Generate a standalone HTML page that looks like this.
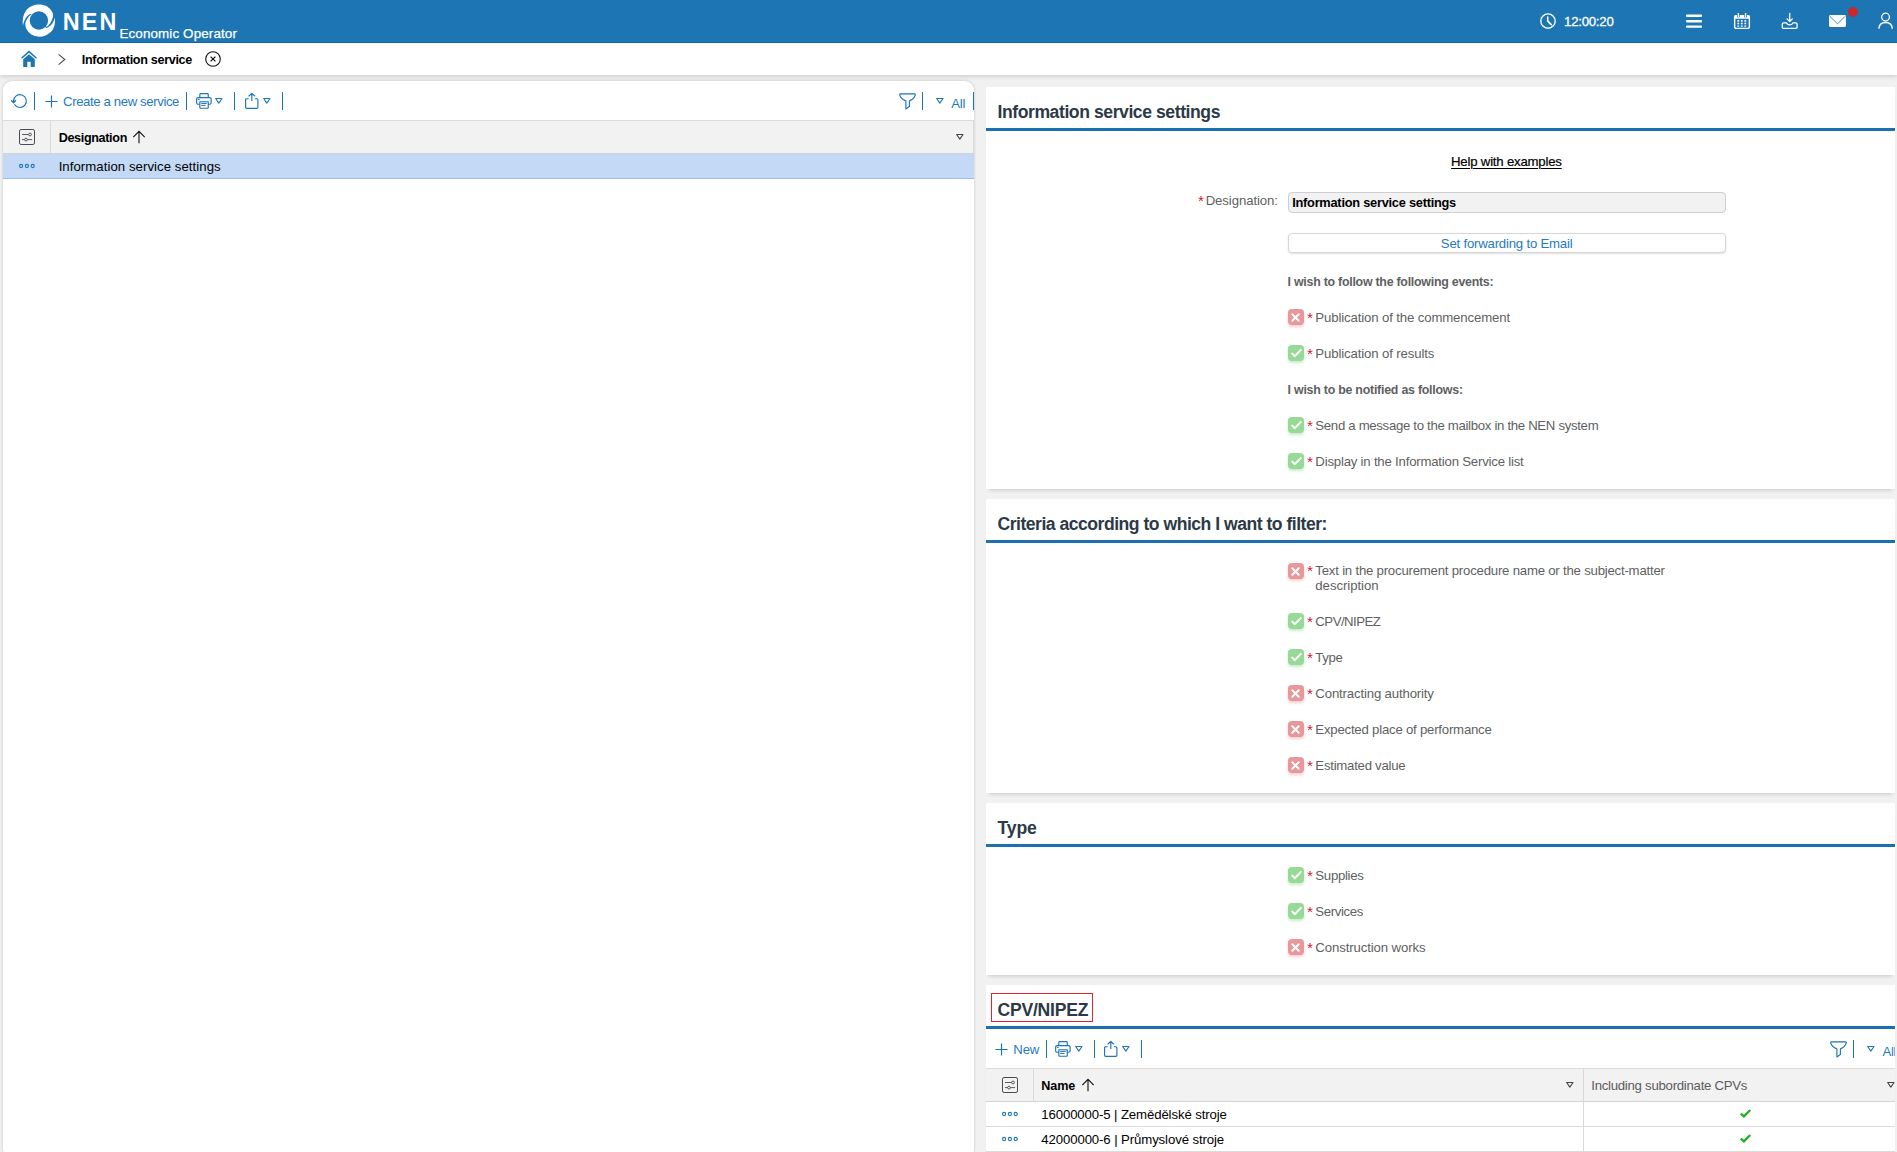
<!DOCTYPE html>
<html lang="en">
<head>
<meta charset="utf-8">
<title>NEN - Information service</title>
<style>
*{box-sizing:border-box;margin:0;padding:0}
html,body{width:1897px;height:1152px;overflow:hidden}
body{position:relative;background:#f1f1f1;font-family:"Liberation Sans",sans-serif;font-size:13.2px;color:#000}
.abs{position:absolute}
.t{position:absolute;white-space:nowrap;line-height:16px}
svg{position:absolute;overflow:visible}
#hdr{left:0;top:0;width:1897px;height:43px;background:#1d75b3;border-bottom:1px solid #0e69aa}
#crumb{left:0;top:43px;width:1897px;height:32px;background:#fff;box-shadow:0 1px 5px rgba(0,0,0,.18)}
#lp{left:3px;top:81px;width:971px;height:1077px;background:#fff;border-radius:9px;box-shadow:0 0 3px rgba(0,0,0,.2)}
.sep{position:absolute;width:1px;background:#1d75b3}
.thead{position:absolute;background:#f2f2f2;border-top:1px solid #dcdcdc;border-bottom:1px solid #d4d4d4}
.vline{position:absolute;width:1px;background:#d9d9d9}
.hline{position:absolute;height:1px;background:#dcdcdc}
.sec{position:absolute;left:986px;width:909px;background:#fff;box-shadow:0 4px 4px -3px rgba(0,0,0,.18)}
.bl{position:absolute;left:0;right:0;top:41px;height:3px;background:#1b70b0}
.cb{position:absolute;left:1288px;width:16px;height:16px;border-radius:4px}
.cb.r{background:#e8979a;box-shadow:0 2px 3px rgba(226,130,134,.38)}
.cb.g{background:#97da97;box-shadow:0 2px 3px rgba(120,200,120,.38)}
.ast{position:absolute;color:#d0213b;font-size:15.4px;line-height:16px;width:8px}
</style>
</head>
<body>
<div id="crumb" class="abs"></div>
<div id="hdr" class="abs">
<svg style="left:22.140px;top:4.350px" width="34" height="33" viewBox="-17 -16.5 34 33">
<path d="M-16.04,5.20 C-16.08,4.44 -16.44,2.44 -16.30,0.66 C-16.16,-1.12 -15.92,-3.54 -15.20,-5.50 C-14.48,-7.46 -13.45,-9.55 -12.00,-11.10 C-10.55,-12.65 -8.50,-13.97 -6.50,-14.80 C-4.50,-15.63 -2.08,-16.07 0.00,-16.10 C2.08,-16.13 4.23,-15.68 6.00,-15.00 C7.77,-14.32 9.37,-13.17 10.60,-12.00 C11.83,-10.83 12.83,-9.17 13.40,-8.00 C13.97,-6.83 13.97,-5.93 14.00,-5.00 C14.03,-4.07 13.67,-2.83 13.60,-2.40 C13.43,-1.95 13.05,-0.63 12.60,0.30 C12.15,1.23 11.48,2.38 10.90,3.20 C10.32,4.02 9.64,4.68 9.10,5.20 C8.56,5.72 7.90,6.12 7.66,6.30 L-8.7,-6.7 C-8.95,-6.53 -9.63,-6.16 -10.20,-5.70 C-10.77,-5.24 -11.54,-4.62 -12.10,-3.95 C-12.66,-3.28 -13.12,-2.45 -13.55,-1.70 C-13.98,-0.95 -14.38,-0.20 -14.70,0.56 C-15.02,1.32 -15.28,2.07 -15.50,2.84 C-15.72,3.61 -15.95,4.81 -16.04,5.20 Z" fill="#fff"/>
<path d="M15.68,-2.99 C15.73,-2.33 16.11,-0.58 16.00,1.00 C15.89,2.58 15.67,4.78 15.00,6.50 C14.33,8.22 13.42,9.90 12.00,11.30 C10.58,12.70 8.42,14.09 6.50,14.90 C4.58,15.71 2.50,16.13 0.50,16.15 C-1.50,16.17 -3.75,15.69 -5.50,15.00 C-7.25,14.31 -8.78,13.17 -10.00,12.00 C-11.22,10.83 -12.21,9.22 -12.80,8.00 C-13.39,6.78 -13.43,5.22 -13.55,4.67 C-13.57,4.37 -13.73,3.49 -13.65,2.84 C-13.57,2.19 -13.38,1.46 -13.10,0.76 C-12.82,0.06 -12.37,-0.64 -11.95,-1.35 C-11.53,-2.06 -11.12,-2.87 -10.60,-3.50 C-10.07,-4.13 -9.33,-4.77 -8.80,-5.15 C-8.27,-5.53 -7.63,-5.69 -7.40,-5.80 L7.3,7.4 C7.54,7.33 8.15,7.30 8.75,7.00 C9.35,6.70 10.18,6.23 10.90,5.60 C11.62,4.97 12.45,4.08 13.10,3.20 C13.75,2.32 14.37,1.33 14.80,0.30 C15.23,-0.73 15.53,-2.44 15.68,-2.99 Z" fill="#fff"/>
<circle cx="-0.090" cy="0.020" r="9.200" fill="#1d75b3"/>
</svg>
<div class="t" style="left:62.82px;top:13.59px;font-size:23.4px;color:#fff;letter-spacing:2.052px;font-weight:700">NEN</div>
<div class="t" style="left:119.44px;top:25.96px;font-size:13.4px;color:#fff;letter-spacing:0.128px;-webkit-text-stroke:0.25px #fff">Economic Operator</div>
<svg style="left:1540px;top:13px" width="16" height="16" viewBox="0 0 16 16" fill="none" stroke="#fff" stroke-width="1.35" stroke-linecap="round" stroke-linejoin="round"><circle cx="8" cy="8" r="7.200"/><path d="M7.700,3.900 V8.100 L11.300,11.600" stroke-width="1.550"/></svg>
<div class="t" style="left:1564.05px;top:14.03px;font-size:13.2px;color:#fff;letter-spacing:-0.235px;-webkit-text-stroke:0.3px #fff">12:00:20</div>
<svg style="left:1686px;top:13px" width="16" height="16" viewBox="0 0 16 16" fill="#fff"><rect x="0" y="1.500" width="16" height="2.400" rx="0.800"/><rect x="0" y="7" width="16" height="2.400" rx="0.800"/><rect x="0" y="12.400" width="16" height="2.400" rx="0.800"/></svg>
<svg style="left:1734px;top:13px" width="16" height="16" viewBox="0 0 16 16">
<rect x="0.650" y="2.650" width="14.700" height="12.700" rx="1.300" fill="none" stroke="#fff" stroke-width="1.400"/>
<rect x="0.650" y="2.650" width="14.700" height="3.100" fill="#fff"/>
<rect x="3" y="2" width="2.700" height="2.300" fill="#1d75b3"/><rect x="10.200" y="2" width="2.700" height="2.300" fill="#1d75b3"/>
<rect x="3.700" y="0" width="1.300" height="4" fill="#fff"/><rect x="10.900" y="0" width="1.300" height="4" fill="#fff"/>
<g fill="#fff"><rect x="3.400" y="7.100" width="1.800" height="1.600"/><rect x="6.900" y="7.100" width="1.800" height="1.600"/><rect x="10.400" y="7.100" width="1.800" height="1.600"/>
<rect x="3.400" y="9.700" width="1.800" height="1.600"/><rect x="6.900" y="9.700" width="1.800" height="1.600"/><rect x="10.400" y="9.700" width="1.800" height="1.600"/>
<rect x="3.400" y="12.300" width="1.800" height="1.600" opacity="0.800"/><rect x="6.900" y="12.300" width="1.800" height="1.600" opacity="0.800"/><rect x="10.400" y="12.300" width="1.800" height="1.600" opacity="0.800"/></g></svg>
<svg style="left:1782px;top:13px" width="16" height="16" viewBox="0 0 16 16" fill="none" stroke="#fff" stroke-width="1.300" stroke-linecap="round" stroke-linejoin="round">
<path d="M7.700,0.500 V8.200 M5.100,5.900 L7.700,8.500 L10.300,5.900"/>
<path d="M1.700,9.900 H4.600 C5.200,11.300 6.300,11.900 7.700,11.900 C9.100,11.900 10.200,11.300 10.800,9.900 H13.700 C14.600,9.900 15.100,10.400 15.100,11.300 V13.900 C15.100,14.800 14.600,15.300 13.700,15.300 H1.700 C0.800,15.300 0.300,14.800 0.300,13.900 V11.300 C0.300,10.400 0.800,9.900 1.700,9.900 Z"/></svg>
<svg style="left:1829px;top:15px" width="17" height="12" viewBox="0 0 17 12"><rect x="0" y="0" width="17" height="12" rx="1.400" fill="#fff"/><path d="M0.900,1.300 L8.500,8.900 L16.100,1.300" fill="none" stroke="#1d75b3" stroke-width="0.850"/></svg>
<div class="abs" style="left:1848px;top:7px;width:10px;height:10px;border-radius:50%;background:#c9282c"></div>
<svg style="left:1877.900px;top:13px" width="16" height="16" viewBox="0 0 16 16" fill="none" stroke="#fff" stroke-width="1.3" stroke-linecap="butt"><circle cx="7.550" cy="4.100" r="3.900"/><path d="M0.950,15.800 C1.050,11.800 3.800,9.500 7.600,9.500 C11.400,9.500 14.150,11.800 14.250,15.800"/></svg>
</div>
<svg style="left:21px;top:51px" width="16" height="16" viewBox="0 0 16 16">
<path d="M0.500,7.200 L8,0.600 L15.500,7.200" fill="none" stroke="#1d75b3" stroke-width="1.500"/>
<path d="M2.200,8.200 L8,3.200 L13.800,8.200 V16 H9.700 V10.800 H6.300 V16 H2.200 Z" fill="#1d75b3"/></svg>
<svg style="left:58px;top:54px" width="8" height="11" viewBox="0 0 8 11" fill="none" stroke="#4a4a4a" stroke-width="1.100"><path d="M0.600,0.400 L6.800,5.500 L0.600,10.600"/></svg>
<div class="t" style="left:81.77px;top:51.93px;font-size:12.6px;color:#000;letter-spacing:-0.313px;font-weight:700">Information service</div>
<svg style="left:205px;top:51px" width="16" height="16" viewBox="0 0 16 16" fill="none" stroke="#111" stroke-width="1.100"><circle cx="8" cy="8" r="7.300"/><path d="M5.600,5.600 L10.400,10.400 M10.400,5.600 L5.600,10.400" stroke-width="1.200"/></svg>
<div id="lp" class="abs"></div>
<svg style="left:11.1px;top:92.7px" width="17" height="16" viewBox="0 0 17 16" fill="none" stroke="#1d75b3" stroke-width="1.100" stroke-linejoin="round"><path d="M3.380,11.280 A6.400,6.400 0 1 0 2.520,8.200 L2.500,9.500"/><path d="M0.200,7.200 L2.500,9.700 L4.900,7.200" stroke-width="1.300"/></svg>
<div class="sep" style="left:34px;top:92px;height:18px"></div><svg style="left:44.6px;top:94.5px" width="13" height="13" viewBox="0 0 13 13" fill="none" stroke="#1d75b3" stroke-width="1.2"><path d="M6.500,0.400 V12.600 M0.400,6.500 H12.600"/></svg>
<div class="t" style="left:63.05px;top:93.73px;font-size:13.2px;color:#1f7abf;letter-spacing:-0.393px">Create a new service</div>
<div class="sep" style="left:186px;top:92px;height:18px"></div><svg style="left:195.6px;top:93.4px" width="16" height="16" viewBox="0 0 16 16" fill="none" stroke="#1d75b3" stroke-width="1.15" stroke-linejoin="round">
<path d="M3.840,4.570 V1.400 C3.840,1 4.100,0.680 4.500,0.680 H11.600 C12,0.680 12.250,1 12.250,1.400 V4.570"/>
<path d="M3.840,11.230 H2.100 C1.300,11.230 0.650,10.600 0.650,9.800 V6 C0.650,5.200 1.300,4.570 2.100,4.570 H13.700 C14.500,4.570 15.140,5.200 15.140,6 V9.800 C15.140,10.600 14.500,11.230 13.700,11.230 H12.250"/>
<path d="M3.840,8.780 H12.250 V14.600 C12.250,15 12,15.290 11.600,15.290 H4.500 C4.100,15.290 3.840,15 3.840,14.600 Z"/>
<path d="M5.200,10.400 H10.800 M5.200,12.400 H9.600" stroke-width="1"/><path d="M1.900,6.400 H3.700" stroke-width="1"/></svg><svg style="left:215.4px;top:98.2px" width="8" height="7" viewBox="0 0 8 7" fill="none" stroke="#1d75b3" stroke-width="1.1" stroke-linejoin="round"><path d="M0.650,0.550 H7 L3.830,5.150 Z"/></svg><div class="sep" style="left:234px;top:92px;height:18px"></div><svg style="left:245.4px;top:93.4px" width="14" height="16" viewBox="0 0 14 16" fill="none" stroke="#1d75b3" stroke-width="1.15" stroke-linecap="round" stroke-linejoin="round">
<path d="M3.300,5.700 H1.600 C1,5.700 0.600,6.100 0.600,6.700 V14.300 C0.600,14.900 1,15.300 1.600,15.300 H11.900 C12.500,15.300 12.900,14.900 12.900,14.300 V6.700 C12.900,6.100 12.500,5.700 11.900,5.700 H10.300"/>
<path d="M6.800,0.700 V7.400 M3.900,3 L6.800,0.450 L9.700,3"/></svg><svg style="left:263.4px;top:98.2px" width="8" height="7" viewBox="0 0 8 7" fill="none" stroke="#1d75b3" stroke-width="1.1" stroke-linejoin="round"><path d="M0.650,0.550 H7 L3.830,5.150 Z"/></svg><div class="sep" style="left:282px;top:92px;height:18px"></div>
<svg style="left:899px;top:92.5px" width="17" height="17" viewBox="0 0 17 17" fill="none" stroke="#1d75b3" stroke-width="1.15" stroke-linejoin="round">
<path d="M1.300,0.900 H15.700 C16.300,0.900 16.500,1.300 16.300,1.900 C15.600,4.600 13.500,6.700 10.400,7.900 V13.600 L6.900,15.900 V7.900 C3.700,6.700 1.400,4.600 0.700,1.900 C0.500,1.300 0.700,0.900 1.300,0.900 Z"/></svg><div class="sep" style="left:922px;top:92px;height:18px"></div><svg style="left:936px;top:98.2px" width="8" height="7" viewBox="0 0 8 7" fill="none" stroke="#1d75b3" stroke-width="1.1" stroke-linejoin="round"><path d="M0.650,0.550 H7 L3.830,5.150 Z"/></svg>
<div class="t" style="left:951.35px;top:96.03px;font-size:13.2px;color:#1f7abf;letter-spacing:-0.328px">All</div>
<div class="sep" style="left:973px;top:92px;height:18px"></div>
<div class="thead" style="left:3px;top:120px;width:971px;height:34px"></div>
<div class="vline" style="left:50px;top:121px;height:32px"></div>
<div class="abs" style="left:972.5px;top:121px;width:1.5px;height:32px;background:#dadada"></div>
<svg style="left:19px;top:129px" width="16" height="16" viewBox="0 0 16 16" fill="none" stroke="#4a4a50" stroke-width="1">
<rect x="0.500" y="0.500" width="15" height="15" rx="1.600"/>
<path d="M3,5.500 H9.600 M3,10.600 H5.600 M8.400,10.600 H13.100" stroke-width="0.9"/>
<circle cx="11" cy="5.500" r="1.400" stroke-width="0.9"/><circle cx="7" cy="10.600" r="1.400" stroke-width="0.9"/></svg>
<div class="t" style="left:58.68px;top:129.83px;font-size:12.6px;color:#000;letter-spacing:-0.342px;font-weight:700">Designation</div>
<svg style="left:133px;top:130.6px" width="12" height="13" viewBox="0 0 12 13" fill="none" stroke="#111" stroke-width="1.1"><path d="M6,12.300 V0.700 M0.300,6.100 L6,0.400 L11.700,6.100"/></svg><svg style="left:956px;top:134px" width="8" height="7" viewBox="0 0 8 7" fill="none" stroke="#444" stroke-width="1.1" stroke-linejoin="round"><path d="M0.650,0.550 H7 L3.830,5.150 Z"/></svg>
<div class="abs" style="left:3px;top:154px;width:971px;height:25px;background:#c4d9f5;border-bottom:1px solid #9bbfed"></div>
<svg style="left:19px;top:163.05px" width="17" height="6" viewBox="0 0 17 6" fill="none" stroke="#1d75b3" stroke-width="1.1">
<circle cx="2.100" cy="3" r="1.580"/><circle cx="7.900" cy="3" r="1.580"/><circle cx="13.700" cy="3" r="1.580"/></svg>
<div class="t" style="left:58.65px;top:158.83px;font-size:13.2px;color:#000;letter-spacing:0.054px">Information service settings</div>
<div class="sec" style="top:87px;height:402px"><div class="bl"></div></div>
<div class="t" style="left:997.47px;top:103.70px;font-size:17.6px;color:#2c3a47;letter-spacing:-0.432px;font-weight:700">Information service settings</div>
<div class="sec" style="top:499px;height:294px"><div class="bl"></div></div>
<div class="t" style="left:997.47px;top:515.70px;font-size:17.6px;color:#2c3a47;letter-spacing:-0.498px;font-weight:700">Criteria according to which I want to filter:</div>
<div class="sec" style="top:803px;height:172px"><div class="bl"></div></div>
<div class="t" style="left:997.47px;top:819.70px;font-size:17.6px;color:#2c3a47;letter-spacing:-0.122px;font-weight:700">Type</div>
<div class="sec" style="top:985px;height:180px"><div class="bl"></div></div>
<div class="t" style="left:997.47px;top:1001.70px;font-size:17.6px;color:#2c3a47;letter-spacing:-0.234px;font-weight:700">CPV/NIPEZ</div>
<div class="t" style="left:1451.05px;top:154.23px;font-size:13.2px;color:#000;letter-spacing:-0.203px;text-decoration:underline;text-underline-offset:2px;text-decoration-thickness:1px;-webkit-text-stroke:0.2px #000">Help with examples</div>
<div class="ast" style="left:1197.90px;top:193.10px">*</div>
<div class="t" style="left:1205.65px;top:192.93px;font-size:13.2px;color:#5e5f62;letter-spacing:-0.092px">Designation:</div>
<div class="abs" style="left:1288px;top:192px;width:438px;height:21px;background:#f2f2f2;border:1px solid #cfcfcf;border-radius:4px"></div>
<div class="t" style="left:1292.17px;top:194.56px;font-size:12.8px;color:#000;letter-spacing:-0.244px;font-weight:700">Information service settings</div>
<div class="abs" style="left:1288px;top:233px;width:438px;height:20px;background:#fff;border:1px solid #d6d6d6;border-radius:4px;box-shadow:0 1px 2px rgba(0,0,0,.12)"></div>
<div class="t" style="left:1440.85px;top:235.73px;font-size:13.2px;color:#1f7abf;letter-spacing:-0.207px">Set forwarding to Email</div>
<div class="t" style="left:1287.58px;top:274.00px;font-size:12.4px;color:#5e5f62;letter-spacing:-0.255px;font-weight:700">I wish to follow the following events:</div>
<div class="cb r" style="top:309px"><svg style="left:3.100px;top:3.500px" width="9" height="9" viewBox="0 0 9 9" fill="none" stroke="#fff" stroke-width="2" stroke-linecap="round"><path d="M1.300,1.300 L7.700,7.700 M7.700,1.300 L1.300,7.700"/></svg></div><div class="ast" style="left:1306.90px;top:310.10px">*</div><div class="t" style="left:1315.35px;top:309.63px;font-size:13.2px;color:#5e5f62;letter-spacing:-0.129px">Publication of the commencement</div>
<div class="cb g" style="top:345px"><svg style="left:2.700px;top:3.700px" width="11" height="9" viewBox="0 0 11 9" fill="none" stroke="#fff" stroke-width="2" stroke-linecap="round" stroke-linejoin="round"><path d="M1.200,4.600 L3.900,7.150 L9.850,0.900"/></svg></div><div class="ast" style="left:1306.90px;top:346.10px">*</div><div class="t" style="left:1315.35px;top:345.63px;font-size:13.2px;color:#5e5f62;letter-spacing:-0.123px">Publication of results</div>
<div class="t" style="left:1287.58px;top:382.00px;font-size:12.4px;color:#5e5f62;letter-spacing:-0.24px;font-weight:700">I wish to be notified as follows:</div>
<div class="cb g" style="top:417px"><svg style="left:2.700px;top:3.700px" width="11" height="9" viewBox="0 0 11 9" fill="none" stroke="#fff" stroke-width="2" stroke-linecap="round" stroke-linejoin="round"><path d="M1.200,4.600 L3.900,7.150 L9.850,0.900"/></svg></div><div class="ast" style="left:1306.90px;top:418.10px">*</div><div class="t" style="left:1315.35px;top:417.63px;font-size:13.2px;color:#5e5f62;letter-spacing:-0.311px">Send a message to the mailbox in the NEN system</div>
<div class="cb g" style="top:453px"><svg style="left:2.700px;top:3.700px" width="11" height="9" viewBox="0 0 11 9" fill="none" stroke="#fff" stroke-width="2" stroke-linecap="round" stroke-linejoin="round"><path d="M1.200,4.600 L3.900,7.150 L9.850,0.900"/></svg></div><div class="ast" style="left:1306.90px;top:454.10px">*</div><div class="t" style="left:1315.35px;top:453.63px;font-size:13.2px;color:#5e5f62;letter-spacing:-0.206px">Display in the Information Service list</div>
<div class="cb r" style="top:563px"><svg style="left:3.100px;top:3.500px" width="9" height="9" viewBox="0 0 9 9" fill="none" stroke="#fff" stroke-width="2" stroke-linecap="round"><path d="M1.300,1.300 L7.700,7.700 M7.700,1.300 L1.300,7.700"/></svg></div><div class="ast" style="left:1306.90px;top:563.10px">*</div><div class="t" style="left:1315.35px;top:562.73px;font-size:13.2px;color:#5e5f62;letter-spacing:-0.212px">Text in the procurement procedure name or the subject-matter</div><div class="t" style="left:1315.35px;top:578.23px;font-size:13.2px;color:#5e5f62;letter-spacing:-0.058px">description</div>
<div class="cb g" style="top:613px"><svg style="left:2.700px;top:3.700px" width="11" height="9" viewBox="0 0 11 9" fill="none" stroke="#fff" stroke-width="2" stroke-linecap="round" stroke-linejoin="round"><path d="M1.200,4.600 L3.900,7.150 L9.850,0.900"/></svg></div><div class="ast" style="left:1306.90px;top:614.10px">*</div><div class="t" style="left:1315.35px;top:613.63px;font-size:13.2px;color:#5e5f62;letter-spacing:-0.516px">CPV/NIPEZ</div>
<div class="cb g" style="top:649px"><svg style="left:2.700px;top:3.700px" width="11" height="9" viewBox="0 0 11 9" fill="none" stroke="#fff" stroke-width="2" stroke-linecap="round" stroke-linejoin="round"><path d="M1.200,4.600 L3.900,7.150 L9.850,0.900"/></svg></div><div class="ast" style="left:1306.90px;top:650.10px">*</div><div class="t" style="left:1315.35px;top:649.63px;font-size:13.2px;color:#5e5f62;letter-spacing:-0.365px">Type</div>
<div class="cb r" style="top:685px"><svg style="left:3.100px;top:3.500px" width="9" height="9" viewBox="0 0 9 9" fill="none" stroke="#fff" stroke-width="2" stroke-linecap="round"><path d="M1.300,1.300 L7.700,7.700 M7.700,1.300 L1.300,7.700"/></svg></div><div class="ast" style="left:1306.90px;top:686.10px">*</div><div class="t" style="left:1315.35px;top:685.63px;font-size:13.2px;color:#5e5f62;letter-spacing:-0.154px">Contracting authority</div>
<div class="cb r" style="top:721px"><svg style="left:3.100px;top:3.500px" width="9" height="9" viewBox="0 0 9 9" fill="none" stroke="#fff" stroke-width="2" stroke-linecap="round"><path d="M1.300,1.300 L7.700,7.700 M7.700,1.300 L1.300,7.700"/></svg></div><div class="ast" style="left:1306.90px;top:722.10px">*</div><div class="t" style="left:1315.35px;top:721.63px;font-size:13.2px;color:#5e5f62;letter-spacing:-0.216px">Expected place of performance</div>
<div class="cb r" style="top:757px"><svg style="left:3.100px;top:3.500px" width="9" height="9" viewBox="0 0 9 9" fill="none" stroke="#fff" stroke-width="2" stroke-linecap="round"><path d="M1.300,1.300 L7.700,7.700 M7.700,1.300 L1.300,7.700"/></svg></div><div class="ast" style="left:1306.90px;top:758.10px">*</div><div class="t" style="left:1315.35px;top:757.63px;font-size:13.2px;color:#5e5f62;letter-spacing:-0.252px">Estimated value</div>
<div class="cb g" style="top:867px"><svg style="left:2.700px;top:3.700px" width="11" height="9" viewBox="0 0 11 9" fill="none" stroke="#fff" stroke-width="2" stroke-linecap="round" stroke-linejoin="round"><path d="M1.200,4.600 L3.900,7.150 L9.850,0.900"/></svg></div><div class="ast" style="left:1306.90px;top:868.10px">*</div><div class="t" style="left:1315.35px;top:867.63px;font-size:13.2px;color:#5e5f62;letter-spacing:-0.299px">Supplies</div>
<div class="cb g" style="top:903px"><svg style="left:2.700px;top:3.700px" width="11" height="9" viewBox="0 0 11 9" fill="none" stroke="#fff" stroke-width="2" stroke-linecap="round" stroke-linejoin="round"><path d="M1.200,4.600 L3.900,7.150 L9.850,0.900"/></svg></div><div class="ast" style="left:1306.90px;top:904.10px">*</div><div class="t" style="left:1315.35px;top:903.63px;font-size:13.2px;color:#5e5f62;letter-spacing:-0.368px">Services</div>
<div class="cb r" style="top:939px"><svg style="left:3.100px;top:3.500px" width="9" height="9" viewBox="0 0 9 9" fill="none" stroke="#fff" stroke-width="2" stroke-linecap="round"><path d="M1.300,1.300 L7.700,7.700 M7.700,1.300 L1.300,7.700"/></svg></div><div class="ast" style="left:1306.90px;top:940.10px">*</div><div class="t" style="left:1315.35px;top:939.63px;font-size:13.2px;color:#5e5f62;letter-spacing:-0.114px">Construction works</div>
<div class="abs" style="left:991px;top:993px;width:102px;height:29px;border:1px solid #e3242b"></div>
<svg style="left:994.6px;top:1042.5px" width="13" height="13" viewBox="0 0 13 13" fill="none" stroke="#1d75b3" stroke-width="1.2"><path d="M6.500,0.400 V12.600 M0.400,6.500 H12.600"/></svg>
<div class="t" style="left:1013.25px;top:1041.93px;font-size:13.2px;color:#1f7abf;letter-spacing:-0.145px">New</div>
<div class="sep" style="left:1046px;top:1040px;height:18px"></div><svg style="left:1055px;top:1041px" width="16" height="16" viewBox="0 0 16 16" fill="none" stroke="#1d75b3" stroke-width="1.15" stroke-linejoin="round">
<path d="M3.840,4.570 V1.400 C3.840,1 4.100,0.680 4.500,0.680 H11.600 C12,0.680 12.250,1 12.250,1.400 V4.570"/>
<path d="M3.840,11.230 H2.100 C1.300,11.230 0.650,10.600 0.650,9.800 V6 C0.650,5.200 1.300,4.570 2.100,4.570 H13.700 C14.500,4.570 15.140,5.200 15.140,6 V9.800 C15.140,10.600 14.500,11.230 13.700,11.230 H12.250"/>
<path d="M3.840,8.780 H12.250 V14.600 C12.250,15 12,15.290 11.600,15.290 H4.500 C4.100,15.290 3.840,15 3.840,14.600 Z"/>
<path d="M5.200,10.400 H10.800 M5.200,12.400 H9.600" stroke-width="1"/><path d="M1.900,6.400 H3.700" stroke-width="1"/></svg><svg style="left:1075.2px;top:1046.1px" width="8" height="7" viewBox="0 0 8 7" fill="none" stroke="#1d75b3" stroke-width="1.1" stroke-linejoin="round"><path d="M0.650,0.550 H7 L3.830,5.150 Z"/></svg><div class="sep" style="left:1094px;top:1040px;height:18px"></div><svg style="left:1104.2px;top:1041px" width="14" height="16" viewBox="0 0 14 16" fill="none" stroke="#1d75b3" stroke-width="1.15" stroke-linecap="round" stroke-linejoin="round">
<path d="M3.300,5.700 H1.600 C1,5.700 0.600,6.100 0.600,6.700 V14.300 C0.600,14.900 1,15.300 1.600,15.300 H11.900 C12.500,15.300 12.900,14.900 12.900,14.300 V6.700 C12.900,6.100 12.500,5.700 11.900,5.700 H10.300"/>
<path d="M6.800,0.700 V7.400 M3.900,3 L6.800,0.450 L9.700,3"/></svg><svg style="left:1122.1px;top:1046.1px" width="8" height="7" viewBox="0 0 8 7" fill="none" stroke="#1d75b3" stroke-width="1.1" stroke-linejoin="round"><path d="M0.650,0.550 H7 L3.830,5.150 Z"/></svg><div class="sep" style="left:1141px;top:1040px;height:18px"></div>
<svg style="left:1830px;top:1040.5px" width="17" height="17" viewBox="0 0 17 17" fill="none" stroke="#1d75b3" stroke-width="1.15" stroke-linejoin="round">
<path d="M1.300,0.900 H15.700 C16.300,0.900 16.500,1.300 16.300,1.900 C15.600,4.600 13.500,6.700 10.400,7.900 V13.600 L6.900,15.900 V7.900 C3.700,6.700 1.400,4.600 0.700,1.900 C0.500,1.300 0.700,0.900 1.300,0.900 Z"/></svg><div class="sep" style="left:1853px;top:1040px;height:18px"></div><svg style="left:1866.7px;top:1046px" width="8" height="7" viewBox="0 0 8 7" fill="none" stroke="#1d75b3" stroke-width="1.1" stroke-linejoin="round"><path d="M0.650,0.550 H7 L3.830,5.150 Z"/></svg>
<div class="abs" style="left:1880px;top:1040px;width:15px;height:20px;overflow:hidden"><div class="t" style="left:2.45px;top:4.23px;font-size:13.2px;color:#1f7abf;letter-spacing:-0.328px">All</div></div>
<div class="thead" style="left:986px;top:1068px;width:909px;height:34px"></div>
<div class="vline" style="left:1033px;top:1069px;height:32px"></div>
<div class="vline" style="left:1583px;top:1069px;height:83px"></div>
<div class="hline" style="left:986px;top:1126px;width:909px"></div>
<div class="hline" style="left:986px;top:1151px;width:909px"></div>
<svg style="left:1002px;top:1077px" width="16" height="16" viewBox="0 0 16 16" fill="none" stroke="#4a4a50" stroke-width="1">
<rect x="0.500" y="0.500" width="15" height="15" rx="1.600"/>
<path d="M3,5.500 H9.600 M3,10.600 H5.600 M8.400,10.600 H13.100" stroke-width="0.9"/>
<circle cx="11" cy="5.500" r="1.400" stroke-width="0.9"/><circle cx="7" cy="10.600" r="1.400" stroke-width="0.9"/></svg>
<div class="t" style="left:1041.27px;top:1077.83px;font-size:12.6px;color:#000;letter-spacing:-0.118px;font-weight:700">Name</div>
<svg style="left:1081.5px;top:1078.6px" width="12" height="13" viewBox="0 0 12 13" fill="none" stroke="#111" stroke-width="1.1"><path d="M6,12.300 V0.700 M0.300,6.100 L6,0.400 L11.700,6.100"/></svg><svg style="left:1566.1px;top:1082.1px" width="8" height="7" viewBox="0 0 8 7" fill="none" stroke="#444" stroke-width="1.1" stroke-linejoin="round"><path d="M0.650,0.550 H7 L3.830,5.150 Z"/></svg>
<div class="t" style="left:1591.25px;top:1077.53px;font-size:13.2px;color:#5c5c5c;letter-spacing:-0.262px">Including subordinate CPVs</div>
<svg style="left:1886.9px;top:1082.1px" width="8" height="7" viewBox="0 0 8 7" fill="none" stroke="#444" stroke-width="1.1" stroke-linejoin="round"><path d="M0.650,0.550 H7 L3.830,5.150 Z"/></svg>
<svg style="left:1001.9px;top:1111.05px" width="17" height="6" viewBox="0 0 17 6" fill="none" stroke="#1d75b3" stroke-width="1.1">
<circle cx="2.100" cy="3" r="1.580"/><circle cx="7.900" cy="3" r="1.580"/><circle cx="13.700" cy="3" r="1.580"/></svg><svg style="left:1001.9px;top:1136px" width="17" height="6" viewBox="0 0 17 6" fill="none" stroke="#1d75b3" stroke-width="1.1">
<circle cx="2.100" cy="3" r="1.580"/><circle cx="7.900" cy="3" r="1.580"/><circle cx="13.700" cy="3" r="1.580"/></svg>
<div class="t" style="left:1041.25px;top:1107.03px;font-size:13.2px;color:#000;letter-spacing:-0.114px">16000000-5 | Zemědělské stroje</div>
<div class="t" style="left:1041.25px;top:1132.03px;font-size:13.2px;color:#000;letter-spacing:-0.105px">42000000-6 | Průmyslové stroje</div>
<svg style="left:1739.5px;top:1108.5px" width="11" height="9" viewBox="0 0 11 9" fill="none" stroke="#23b123" stroke-width="2.3" stroke-linejoin="miter"><path d="M0.800,4.600 L3.900,7.400 L10.200,1"/></svg><svg style="left:1739.5px;top:1133.5px" width="11" height="9" viewBox="0 0 11 9" fill="none" stroke="#23b123" stroke-width="2.3" stroke-linejoin="miter"><path d="M0.800,4.600 L3.900,7.400 L10.200,1"/></svg>
</body>
</html>
